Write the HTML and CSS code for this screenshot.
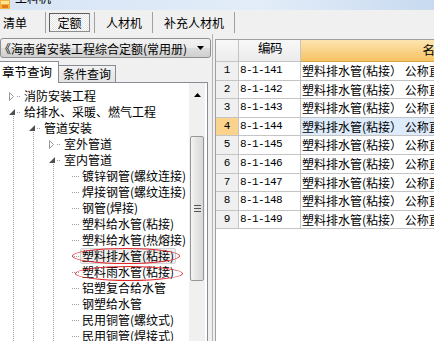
FILE: index.html
```html
<!DOCTYPE html>
<html lang="zh-CN">
<head>
    <meta charset="UTF-8">
    <meta name="viewport" content="width=device-width, initial-scale=1.0">
    <title>工料机</title>
    <link rel="stylesheet" href="styles.css">
</head>
<body>
    <div class="window">
        <div class="titlebar">
            <svg class="app-icon" width="10" height="9" viewBox="0 0 10 9">
                <rect x="0" y="0" width="10" height="9" fill="#f4b23c"/>
                <rect x="1" y="1" width="8" height="3" fill="#fde59a"/>
                <rect x="2" y="5" width="6" height="3" fill="#e07a1a"/>
            </svg>
            <span class="title">工料机</span>
        </div>

        <div class="toolbar">
            <span class="tb-item first">清单</span>
            <i class="tb-sep"></i>
            <span class="tb-item pressed">定额</span>
            <i class="tb-sep"></i>
            <span class="tb-item">人材机</span>
            <i class="tb-sep"></i>
            <span class="tb-item">补充人材机</span>
            <i class="tb-sep"></i>
        </div>

        <div class="main">
            <div class="left">
                <div class="combo">
                    <span class="combo-text">《海南省安装工程综合定额(常用册)</span>
                    <svg class="combo-arrow" width="7" height="4" viewBox="0 0 7 4"><path d="M0 0 L7 0 L3.5 4 Z" fill="#000"/></svg>
                </div>

                <div class="tabs">
                    <span class="tab active">章节查询</span>
                    <span class="tab">条件查询</span>
                </div>

                <div class="tree-wrap">
                    <div class="tree">
                        <div class="node"><span class="exp closed"><svg width="6" height="9" viewBox="0 0 6 9"><path d="M0.5 0.5 L4.5 4.5 L0.5 8.5 Z" fill="#fff" stroke="#9a9a9a"/></svg></span><span class="label">消防安装工程</span></div>
                        <div class="node"><span class="exp open"><svg width="6" height="6" viewBox="0 0 6 6"><path d="M6 0 L6 6 L0 6 Z" fill="#505050"/></svg></span><span class="label">给排水、采暖、燃气工程</span></div>
                        <div class="node"><i class="g"></i><span class="exp open"><svg width="6" height="6" viewBox="0 0 6 6"><path d="M6 0 L6 6 L0 6 Z" fill="#505050"/></svg></span><span class="label">管道安装</span></div>
                        <div class="node"><i class="g"></i><i class="g"></i><span class="exp closed"><svg width="6" height="9" viewBox="0 0 6 9"><path d="M0.5 0.5 L4.5 4.5 L0.5 8.5 Z" fill="#fff" stroke="#9a9a9a"/></svg></span><span class="label">室外管道</span></div>
                        <div class="node"><i class="g"></i><i class="g"></i><span class="exp open"><svg width="6" height="6" viewBox="0 0 6 6"><path d="M6 0 L6 6 L0 6 Z" fill="#505050"/></svg></span><span class="label">室内管道</span></div>
                        <div class="node"><i class="g"></i><i class="g"></i><i class="g"></i><i class="c"></i><span class="label leaf">镀锌钢管(螺纹连接)</span></div>
                        <div class="node"><i class="g"></i><i class="g"></i><i class="g"></i><i class="c"></i><span class="label leaf">焊接钢管(螺纹连接)</span></div>
                        <div class="node"><i class="g"></i><i class="g"></i><i class="g"></i><i class="c"></i><span class="label leaf">钢管(焊接)</span></div>
                        <div class="node"><i class="g"></i><i class="g"></i><i class="g"></i><i class="c"></i><span class="label leaf">塑料给水管(粘接)</span></div>
                        <div class="node"><i class="g"></i><i class="g"></i><i class="g"></i><i class="c"></i><span class="label leaf">塑料给水管(热熔接)</span></div>
                        <div class="node"><i class="g"></i><i class="g"></i><i class="g"></i><i class="c"></i><span class="label leaf selected">塑料排水管(粘接)</span></div>
                        <div class="node"><i class="g"></i><i class="g"></i><i class="g"></i><i class="c"></i><span class="label leaf">塑料雨水管(粘接)</span></div>
                        <div class="node"><i class="g"></i><i class="g"></i><i class="g"></i><i class="c"></i><span class="label leaf">铝塑复合给水管</span></div>
                        <div class="node"><i class="g"></i><i class="g"></i><i class="g"></i><i class="c"></i><span class="label leaf">钢塑给水管</span></div>
                        <div class="node"><i class="g"></i><i class="g"></i><i class="g"></i><i class="c"></i><span class="label leaf">民用铜管(螺纹式)</span></div>
                        <div class="node"><i class="g"></i><i class="g"></i><i class="g"></i><i class="c"></i><span class="label leaf">民用铜管(焊接式)</span></div>

                        <!-- red marks drawn over the two items -->
                        <div class="mark mark-1"></div>
                        <div class="mark mark-2"></div>
                    </div>
                    <div class="vscroll">
                        <div class="sb-up"><svg width="7" height="4" viewBox="0 0 7 4"><path d="M3.5 0 L7 4 L0 4 Z" fill="#000"/></svg></div>
                        <div class="sb-gap"></div>
                        <div class="sb-thumb"><span class="grip"></span></div>
                    </div>
                </div>
            </div>

            <div class="right">
                <div class="grid">
                    <div class="row head">
                        <span class="cell num"></span>
                        <span class="cell code">编码</span>
                        <span class="cell name">名称</span>
                    </div>
                    <div class="row"><span class="cell num">1</span><span class="cell code">8-1-141</span><span class="cell name">塑料排水管(粘接） 公称直径(mm以内) 50</span></div>
                    <div class="row"><span class="cell num">2</span><span class="cell code">8-1-142</span><span class="cell name">塑料排水管(粘接） 公称直径(mm以内) 75</span></div>
                    <div class="row"><span class="cell num">3</span><span class="cell code">8-1-143</span><span class="cell name">塑料排水管(粘接） 公称直径(mm以内) 100</span></div>
                    <div class="row current"><span class="cell num">4</span><span class="cell code">8-1-144</span><span class="cell name">塑料排水管(粘接） 公称直径(mm以内) 150</span></div>
                    <div class="row"><span class="cell num">5</span><span class="cell code">8-1-145</span><span class="cell name">塑料排水管(粘接） 公称直径(mm以内) 200</span></div>
                    <div class="row"><span class="cell num">6</span><span class="cell code">8-1-146</span><span class="cell name">塑料排水管(粘接） 公称直径(mm以内) 250</span></div>
                    <div class="row"><span class="cell num">7</span><span class="cell code">8-1-147</span><span class="cell name">塑料排水管(粘接） 公称直径(mm以内) 300</span></div>
                    <div class="row"><span class="cell num">8</span><span class="cell code">8-1-148</span><span class="cell name">塑料排水管(粘接） 公称直径(mm以内) 350</span></div>
                    <div class="row"><span class="cell num">9</span><span class="cell code">8-1-149</span><span class="cell name">塑料排水管(粘接） 公称直径(mm以内) 400</span></div>
                </div>
            </div>
        </div>
    </div>
</body>
</html>
```

FILE: styles.css
```css
* {
    box-sizing: border-box;
}

body {
    margin: 0;
    font-family: "Noto Sans CJK SC", "Liberation Sans", sans-serif;
    font-size: 12px;
    color: #000;
    background: #f0f0f0;
    overflow: hidden;
}

.window {
    width: 434px;
    height: 341px;
    display: flex;
    flex-direction: column;
    overflow: hidden;
}

/* title bar, cut off at the top */
.titlebar {
    height: 10px;
    flex: none;
    display: flex;
    align-items: flex-end;
    overflow: hidden;
    background: linear-gradient(to right, #d6e4f5, #e3edf9 60%, #c8daf0);
}

.app-icon {
    flex: none;
    align-self: flex-start;
}

.title {
    margin-left: 5px;
    line-height: 12px;
    margin-bottom: 6px;
}

/* toolbar */
.toolbar {
    height: 24px;
    flex: none;
    display: flex;
    align-items: center;
}

.tb-item {
    line-height: 19px;
    padding: 0 10px 0 11px;
}

.tb-item.first {
    padding: 0 18px 0 3px;
}

.tb-item.pressed {
    margin: 0 4px 0 3px;
    width: 41px;
    height: 19px;
    padding: 0;
    text-align: center;
    line-height: 17px;
    border: 1px solid #8c8c8c;
    border-top-color: #5e5e5e;
    border-left-color: #5e5e5e;
    background: repeating-conic-gradient(#ffffff 0 25%, #e4e4e4 0 50%) 0 0 / 2px 2px;
}

.tb-sep {
    width: 1px;
    height: 21px;
    background: #a0a0a0;
}

/* main area */
.main {
    flex: 1;
    display: flex;
    min-height: 0;
}

.left {
    width: 212px;
    flex: none;
    display: flex;
    flex-direction: column;
}

.combo {
    margin-top: 4px;
    width: 211px;
    height: 20px;
    display: flex;
    align-items: center;
    justify-content: space-between;
    padding: 0 6px 0 0;
    border: 1px solid #8e8f8f;
    border-radius: 3px;
    background: linear-gradient(#f2f2f2, #ebebeb 50%, #dddddd 51%, #cfcfcf);
}

.combo-text {
    white-space: nowrap;
    margin-left: -2px;
}

.tabs {
    margin-top: 3px;
    height: 21px;
    display: flex;
    align-items: flex-end;
}

.tab {
    height: 17px;
    line-height: 15px;
    padding: 0 4px;
    border: 1px solid #898c95;
    border-bottom: none;
    border-left: none;
    background: linear-gradient(#f2f2f2, #e3e3e3);
}

.tab.active {
    position: relative;
    z-index: 1;
    height: 22px;
    margin-bottom: -1px;
    line-height: 19px;
    width: 59px;
    padding: 0 2px;
    background: #fff;
    font-size: 12.5px;
}

.tree-wrap {
    flex: 1;
    width: 208px;
    display: flex;
    min-height: 0;
    background: #fff;
    border-top: 1px solid #898c95;
    border-right: 1px solid #898c95;
    padding-right: 2px;
}

.tree {
    position: relative;
    flex: 1;
    padding-top: 5px;
    overflow: hidden;
}

.node {
    height: 16px;
    display: flex;
    align-items: center;
    white-space: nowrap;
}

/* dotted guide lines */
.g {
    flex: none;
    width: 20px;
    height: 16px;
    background: repeating-linear-gradient(#a0a0a0 0 1px, transparent 1px 2px) 13px 0 / 1px 16px no-repeat;
}

.c {
    flex: none;
    width: 20px;
    height: 16px;
    background: repeating-linear-gradient(to right, #a0a0a0 0 1px, transparent 1px 2px) 12px 8px / 8px 1px no-repeat;
}

.exp {
    flex: none;
    width: 20px;
    height: 16px;
    display: flex;
    align-items: center;
    padding-left: 9px;
    background: repeating-linear-gradient(to right, #a0a0a0 0 1px, transparent 1px 2px) 17px 8px / 3px 1px no-repeat;
}

.exp.open {
    background:
        repeating-linear-gradient(to right, #a0a0a0 0 1px, transparent 1px 2px) 17px 8px / 3px 1px no-repeat,
        repeating-linear-gradient(#a0a0a0 0 1px, transparent 1px 2px) 13px 12px / 1px 4px no-repeat;
}

.exp.open svg {
    margin-top: -1px;
}

.label {
    margin-left: 4px;
    line-height: 16px;
}

.label.leaf {
    margin-left: 2px;
}

.label.selected {
    margin-left: 0;
    padding: 0 1px;
    line-height: 14px;
    border: 1px solid #d4d4d4;
    border-radius: 2px;
    background: #efefef;
}

.mark {
    position: absolute;
    border: 1px solid #e0262b;
    border-radius: 50%;
}

.mark-1 {
    left: 72px;
    top: 165px;
    width: 108px;
    height: 16px;
}

.mark-2 {
    left: 75px;
    top: 183px;
    width: 108px;
    height: 15px;
}

/* vertical scrollbar */
.vscroll {
    width: 16px;
    flex: none;
    display: flex;
    flex-direction: column;
    background: #f0f0f0;
}

.sb-up {
    height: 18px;
    display: flex;
    align-items: center;
    justify-content: center;
    padding-top: 5px;
}

.sb-gap {
    height: 35px;
}

.sb-thumb {
    height: 145px;
    margin: 0 1px;
    display: flex;
    align-items: center;
    justify-content: center;
    border: 1px solid #979797;
    border-radius: 2px;
    background: linear-gradient(to right, #f4f4f4, #e4e4e4 50%, #d8d8d8);
}

.grip {
    width: 7px;
    height: 7px;
    background: repeating-linear-gradient(#555 0 1px, transparent 1px 3px);
}

/* grid on the right */
.right {
    flex: 1;
    min-width: 0;
    display: flex;
    flex-direction: column;
    padding: 5px 0 0 2px;
    border-left: 1px solid #b4b4b4;
}

.grid {
    flex: 1;
    overflow: hidden;
    background: #fff;
    border-top: 1px solid #a0a0a0;
    border-left: 1px solid #a0a0a0;
}

.row {
    display: grid;
    grid-template-columns: 23px 62px 268px;
    height: 18.6px;
}

.cell {
    white-space: nowrap;
    overflow: hidden;
    border-right: 1px solid #c4c4c4;
    border-bottom: 1px solid #c4c4c4;
    line-height: 17px;
}

.row.head {
    height: 22px;
}

.row.head .cell {
    line-height: 20px;
    text-align: center;
    background: linear-gradient(#f8f8f8, #ececec);
    font-size: 12.5px;
}

.row.head .name {
    background: linear-gradient(#fde5b0, #f6c264);
    border-bottom-color: #d9a54a;
}

.num {
    text-align: center;
    background: #f0f0f0;
    font-family: "Liberation Mono", monospace;
    font-size: 11px;
}

.code {
    padding-left: 1px;
    font-family: "Liberation Mono", monospace;
    font-size: 11px;
    letter-spacing: -0.6px;
}

.name {
    padding-left: 1px;
}

.row.current .num {
    background: #fcd38c;
}

.row.current .name {
    background: #ddebfb;
}
```
